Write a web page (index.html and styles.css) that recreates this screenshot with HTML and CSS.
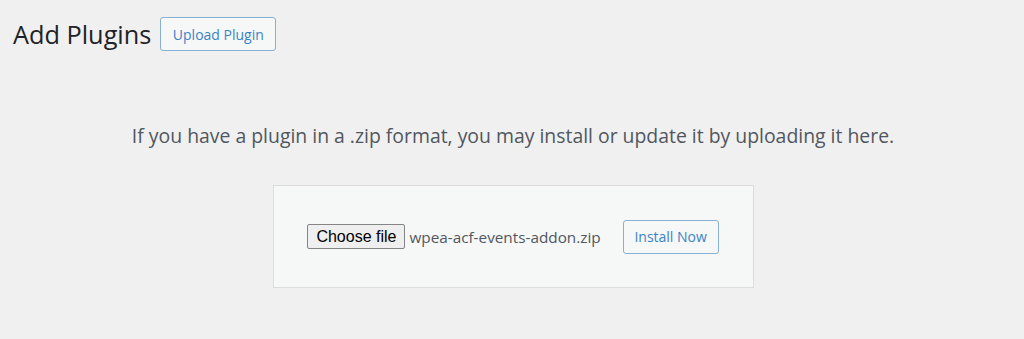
FILE: index.html
```html
<!DOCTYPE html>
<html lang="en">
<head>
<meta charset="utf-8">
<title>Add Plugins</title>
<link rel="stylesheet" href="styles.css">
</head>
<body>
<div class="wrap">
  <div class="header">
    <h1 class="title">Add Plugins</h1>
    <button class="btn btn-upload" type="button">Upload Plugin</button>
  </div>
  <div class="upload-area">
    <p class="install-help">If you have a plugin in a .zip format, you may install or update it by uploading it here.</p>
    <form class="upload-form">
      <div class="file-input">
        <span class="file-btn">Choose file</span>
        <span class="file-name">wpea-acf-events-addon.zip</span>
      </div>
      <button class="btn btn-install" type="button">Install Now</button>
    </form>
  </div>
</div>
</body>
</html>
```

FILE: styles.css
```css
html, body {
  margin: 0;
  padding: 0;
  background: #f0f0f1;
  height: 100%;
}
body {
  font-family: "Open Sans", sans-serif;
  color: #3c434a;
}
.wrap {
  padding: 17px 0 0 13px;
}
.header {
  display: flex;
  align-items: center;
  gap: 9px;
}
.title {
  margin: 0;
  font-size: 25.3px;
  font-weight: 400;
  color: #1d2327;
  line-height: 34px;
}
.btn {
  font-family: "Open Sans", sans-serif;
  background: #f6f7f7;
  border: 1px solid #86b0d6;
  border-radius: 3px;
  color: #3b84c4;
  font-size: 14px;
  cursor: pointer;
}
.btn-upload {
  height: 34px;
  width: 116px;
  padding: 0;
}
.upload-area {
  display: flex;
  flex-direction: column;
  align-items: center;
  margin-left: -13px;
  padding-left: 2px;
}
.install-help {
  margin: 73px 0 0;
  font-size: 19.4px;
  color: #50575e;
  line-height: 24px;
}
.upload-form {
  margin-top: 37px;
  width: 481px;
  height: 103px;
  box-sizing: border-box;
  background: #f6f7f7;
  border: 1px solid #dcdcde;
  display: flex;
  align-items: center;
  justify-content: center;
}
.file-input {
  display: flex;
  align-items: center;
  gap: 4px;
}
.file-btn {
  font-family: "Liberation Sans", Arial, sans-serif;
  font-size: 16px;
  color: #000;
  background: #efefef;
  border: 1px solid #858585;
  border-radius: 2px;
  height: 23px;
  line-height: 23px;
  padding: 0 8px;
  box-sizing: content-box;
}
.file-name {
  font-size: 15.3px;
  color: #50575e;
}
.btn-install {
  margin-left: 22px;
  width: 96px;
  height: 34px;
  padding: 0;
}
```
